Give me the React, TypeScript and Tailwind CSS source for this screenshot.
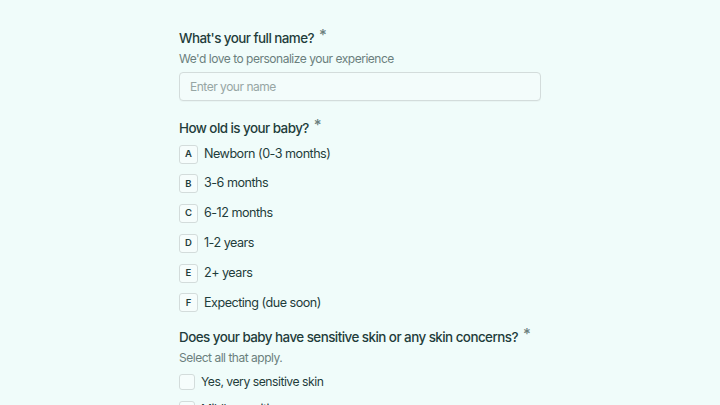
const AGES = [
  { key: 'A', label: 'Newborn (0-3 months)' },
  { key: 'B', label: '3-6 months' },
  { key: 'C', label: '6-12 months' },
  { key: 'D', label: '1-2 years' },
  { key: 'E', label: '2+ years' },
  { key: 'F', label: 'Expecting (due soon)' },
]

const SKIN = ['Yes, very sensitive skin', 'Mildly sensitive', 'No concerns']

function Title({ children }: { children: React.ReactNode }) {
  return (
    <h2 className="text-[13.4px] font-medium text-[#1f3d3b] leading-5 tracking-[-0.04em]">
      {children}
      <span className="ml-[5px] text-[15px] text-[#6b7f7d] relative -top-[3px]">*</span>
    </h2>
  )
}

export default function App() {
  return (
    <div className="bg-[#f0fcfa] font-['Inter',sans-serif] overflow-hidden h-[405px]">
      <div className="w-[362px] ml-[179px] pt-[28px]">
        <Title>What's your full name?</Title>
        <p className="mt-[1px] text-[12px] text-[#6b7f7d] leading-5 tracking-[-0.04em]">We'd love to personalize your experience</p>
        <input
          placeholder="Enter your name"
          className="mt-[3px] w-full h-[29px] rounded border border-[#d3dcdb] bg-[#f3fcfb] px-[10px] text-[12px] tracking-[-0.04em] text-[#1f3d3b] placeholder:text-[#97a6a4] outline-none shadow-[0_1px_1px_rgba(0,0,0,0.03)]"
        />

        <div className="mt-[17px]">
          <Title>How old is your baby?</Title>
          <div className="mt-[6.5px] flex flex-col gap-[10.8px]">
            {AGES.map(a => (
              <div key={a.key} className="flex items-center gap-[6px]">
                <span className="w-[19px] h-[19px] rounded-[3px] border border-[#d3dcdb] bg-white/40 flex items-center justify-center text-[9.5px] font-semibold text-[#1f3d3b]">
                  {a.key}
                </span>
                <span className="text-[12.6px] tracking-[-0.04em] text-[#1f3d3b]">{a.label}</span>
              </div>
            ))}
          </div>
        </div>

        <div className="mt-[14.5px]">
          <Title>Does your baby have sensitive skin or any skin concerns?</Title>
          <p className="mt-[1px] text-[12px] text-[#6b7f7d] leading-5 tracking-[-0.04em]">Select all that apply.</p>
          <div className="mt-[5px] flex flex-col gap-[9px]">
            {SKIN.map(s => (
              <label key={s} className="flex items-center gap-[6px]">
                <span className="w-[16px] h-[16px] rounded-[3px] border border-[#d3dcdb] bg-white/40" />
                <span className="text-[12.2px] tracking-[-0.04em] text-[#1f3d3b]">{s}</span>
              </label>
            ))}
          </div>
        </div>
      </div>
    </div>
  )
}
